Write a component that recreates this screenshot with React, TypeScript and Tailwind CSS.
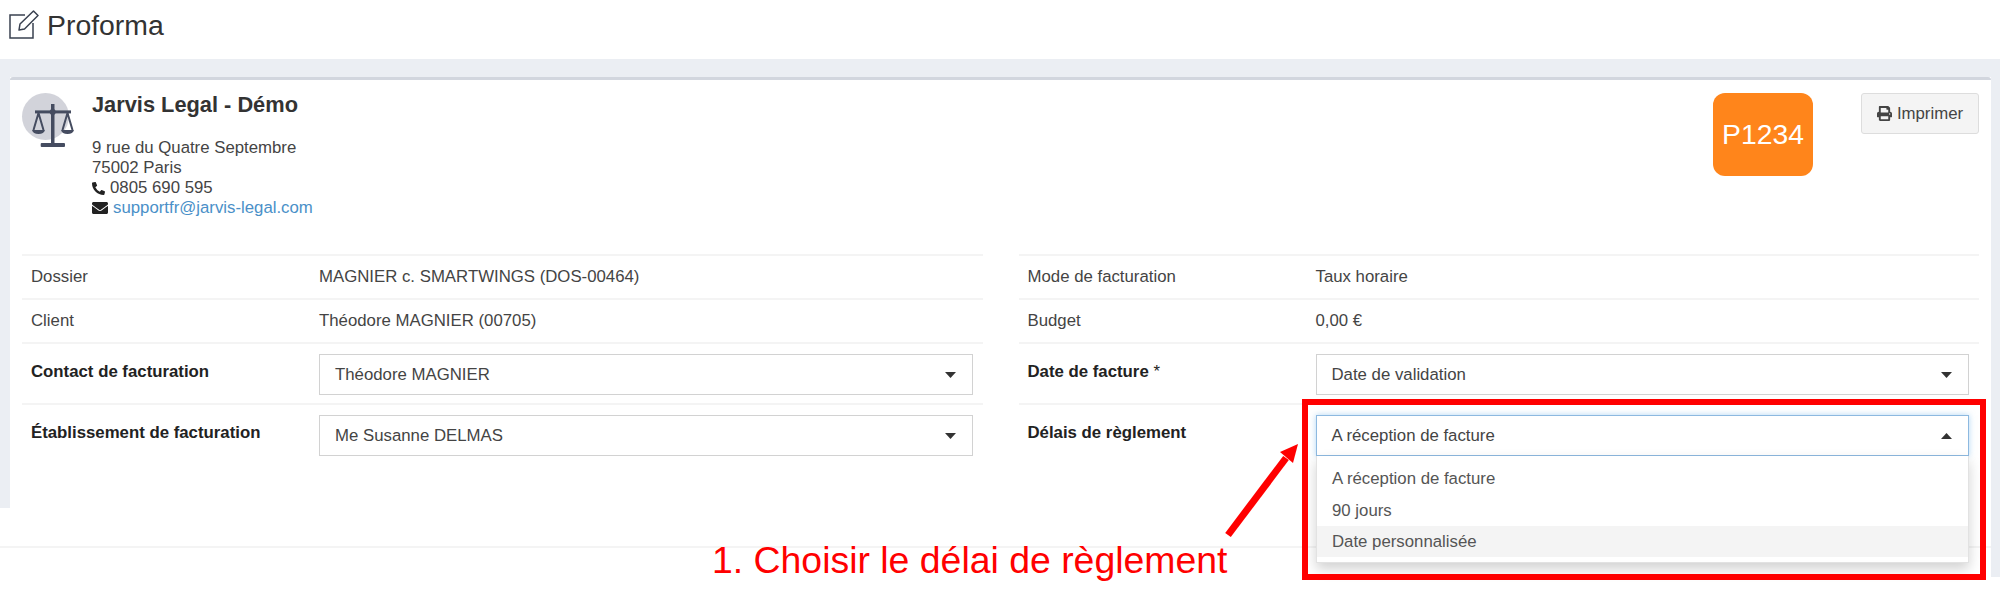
import { FaEnvelope, FaPhoneAlt, FaPrint } from 'react-icons/fa'

const Row = ({ label, value }: { label: string; value: string }) => (
  <div className="flex h-[44px] items-center border-t-2 border-[#f4f4f4] pl-[9px]">
    <div className="w-[288px]">{label}</div>
    <div>{value}</div>
  </div>
)

const Caret = ({ up }: { up?: boolean }) => (
  <svg width="11" height="6" viewBox="0 0 11 6" className="text-[#333]">
    <path d={up ? 'M0 6 L5.5 0 L11 6 Z' : 'M0 0 L11 0 L5.5 6 Z'} fill="currentColor" />
  </svg>
)

const Select = ({ value, focused }: { value: string; focused?: boolean }) => (
  <div
    className={
      focused
        ? 'flex h-[41px] flex-1 items-center justify-between border border-[#8db9e0] pl-[15px] pr-[16px] shadow-[0_0_6px_rgba(102,175,233,0.5)]'
        : 'flex h-[41px] flex-1 items-center justify-between border border-[#d2d2d2] pl-[15px] pr-[16px]'
    }
  >
    <span>{value}</span>
    <Caret up={focused} />
  </div>
)

const SelectRow = ({ label, value, focused, required }: { label: string; value: string; focused?: boolean; required?: boolean }) => (
  <div className="flex h-[61px] border-t-2 border-[#f4f4f4] pl-[9px] pr-[10px] pt-[10px]">
    <div className="w-[288px] pt-[5px] font-bold text-[#222]">
      {label}
      {required && <span className="font-normal"> *</span>}
    </div>
    <Select value={value} focused={focused} />
  </div>
)

export default function App() {
  return (
    <div className="relative h-[605px] w-[2000px] overflow-hidden bg-white font-['Liberation_Sans',Arial,sans-serif] text-[16.8px] text-[#444]">
      <header className="flex h-[59px] items-center pb-[8px] pl-[8px] text-[28.4px] text-[#333]">
        {/* edit icon */}
        <svg width="32" height="32" viewBox="0 0 32 32" className="mr-[7px] text-[#3a4150]" fill="none" stroke="currentColor" strokeWidth="1.5">
          <path d="M17 5 H2 V28 H25 V13" />
          <path d="M12 14 L25.5 1 L30 5.5 L16.5 19 L11 20 Z" strokeLinejoin="round" />
        </svg>
        Proforma
      </header>

      <div className="flex items-start">
        <div className="flex-1">
          <div className="flex h-[449px]">
            <div className="w-[10px] bg-[#ebeef3]" />
            <div className="flex-1">
              <div className="h-[18px] bg-[#ebeef3]" />
              <div className="rounded-t-[3px] border-t-[3px] border-[#d2d6de] bg-white">
                <div className="flex h-[174px] pl-[12px] pr-[12px] pt-[13px]">
                  <div className="relative h-[47px] w-[47px] rounded-full bg-[#d2d3da]">
                    {/* scales */}
                    <svg width="46" height="48" viewBox="0 0 46 48" className="absolute left-[8px] top-[9px] text-[#454c60]" fill="none" stroke="currentColor">
                      <rect x="21" y="2" width="3.5" height="40" fill="currentColor" stroke="none" />
                      <rect x="10.7" y="41" width="24.3" height="4" rx="1" fill="currentColor" stroke="none" />
                      <rect x="5" y="8.4" width="36" height="3" fill="currentColor" stroke="none" />
                      <circle cx="22.7" cy="10" r="3" fill="currentColor" stroke="none" />
                      <path d="M8.5 11 L3.5 28 M8.5 11 L13.5 28 M37.5 11 L32.5 28 M37.5 11 L42.5 28" strokeWidth="2" />
                      <path d="M2 28 H15 Q14 32 8.5 32 Q3 32 2 28 Z M31 28 H44 Q43 32 37.5 32 Q32 32 31 28 Z" fill="currentColor" stroke="none" />
                    </svg>
                  </div>
                  <div className="ml-[23px] flex-1">
                    <div className="mt-[-1px] text-[21.8px] leading-[26px] font-bold text-[#333]">Jarvis Legal - Démo</div>
                    <div className="mt-[20px] leading-[20px]">
                      <div>9 rue du Quatre Septembre</div>
                      <div>75002 Paris</div>
                      <div className="flex items-center gap-[5px]">
                        <FaPhoneAlt className="text-[13px] text-[#222]" />
                        0805 690 595
                      </div>
                      <div className="flex items-center gap-[5px]">
                        <FaEnvelope className="text-[16px] text-[#222]" />
                        <span className="text-[#4a90c8]">supportfr@jarvis-legal.com</span>
                      </div>
                    </div>
                  </div>
                  <div className="mr-[48px] flex h-[83px] w-[100px] items-center justify-center rounded-[12px] bg-[#ff851b] text-[28.3px] text-white">
                    P1234
                  </div>
                  <div className="flex h-[41px] w-[118px] items-center justify-center gap-[5px] rounded-[3px] border border-[#ddd] bg-[#f4f4f4]">
                    <FaPrint className="text-[15px]" />
                    Imprimer
                  </div>
                </div>

                <div className="flex gap-[36px] pl-[12px] pr-[12px]">
                  <div className="flex-1">
                    <Row label="Dossier" value="MAGNIER c. SMARTWINGS (DOS-00464)" />
                    <Row label="Client" value="Théodore MAGNIER (00705)" />
                    <SelectRow label="Contact de facturation" value="Théodore MAGNIER" />
                    <SelectRow label="Établissement de facturation" value="Me Susanne DELMAS" />
                  </div>
                  <div className="flex-1">
                    <Row label="Mode de facturation" value="Taux horaire" />
                    <Row label="Budget" value="0,00 €" />
                    <SelectRow label="Date de facture" value="Date de validation" required />
                    <SelectRow label="Délais de règlement" value="A réception de facture" focused />
                  </div>
                </div>
              </div>
            </div>
          </div>
          <div className="mt-[38px] h-[2px] bg-[#f4f4f4]" />
        </div>
        <div className="h-[518px] w-[9px] bg-[#ebeef3]" />
      </div>

      {/* open dropdown */}
      <div className="absolute left-[1316px] top-[456px] h-[107px] w-[653px] border border-t-0 border-[#e2e2e2] bg-white pt-[7px] text-[#555] shadow-[0_6px_12px_rgba(0,0,0,0.18)]">
        <div className="flex h-[32px] items-center pl-[15px]">A réception de facture</div>
        <div className="flex h-[31px] items-center pl-[15px]">90 jours</div>
        <div className="flex h-[31px] items-center bg-[#f4f4f4] pl-[15px]">Date personnalisée</div>
      </div>

      {/* annotation */}
      <div className="absolute left-[1302px] top-[399px] h-[181px] w-[684px] border-[6px] border-[#ff0000]" />
      <svg className="absolute left-[1220px] top-[440px]" width="84" height="100" viewBox="0 0 84 100">
        <path d="M8 95 L66 18" stroke="#ff0000" strokeWidth="7" fill="none" />
        <path d="M78 4 L73 23 L60 12 Z" fill="#ff0000" />
      </svg>
      <div className="absolute left-[712px] top-[538px] text-[37.4px] leading-[44px] text-[#ff0000]">
        1. Choisir le délai de règlement
      </div>
    </div>
  )
}
